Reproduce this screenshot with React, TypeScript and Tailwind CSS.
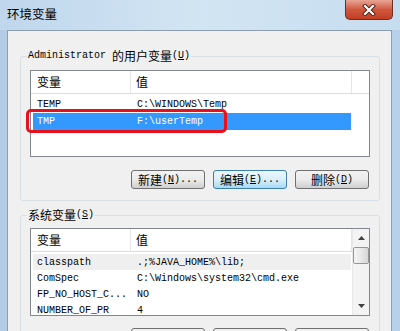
import React from 'react';

const mono = "font-['Liberation_Mono',monospace] text-[10px]";
const cjk = "font-['Noto_Sans_CJK_SC',sans-serif] text-[12px]";

type Row = { name: string; value: string };

function Hotkey({ k }: { k: string }) {
  return (
    <span className={mono}>
      (<span className="underline underline-offset-1">{k}</span>)
    </span>
  );
}

function Button({ label, hotkey, dots, active }: { label: string; hotkey: string; dots?: boolean; active?: boolean }) {
  return (
    <div
      className={
        'w-[74px] h-[19px] rounded-[3px] border flex items-center justify-center leading-none ' +
        (active
          ? 'border-[#3c7fb1] bg-gradient-to-b from-[#eaf6fd] via-[#d9f0fc] to-[#a7d9f5]'
          : 'border-[#707070] bg-gradient-to-b from-[#f2f2f2] via-[#ebebeb] to-[#cfcfcf]')
      }
    >
      <span className={cjk}>{label}</span>
      <Hotkey k={hotkey} />
      {dots && <span className={mono}>...</span>}
    </div>
  );
}

function Header({ extra }: { extra?: boolean }) {
  return (
    <div className="h-[23px] flex border-b border-[#dcdcdc] bg-white shrink-0">
      <div className={'w-[100px] pl-[6px] flex items-center border-r border-[#e5e5e5] ' + cjk}>变量</div>
      <div className={'w-[221px] pl-[5px] flex items-center border-r border-[#e5e5e5] ' + cjk}>值</div>
      {extra && <div className="flex-1" />}
    </div>
  );
}

function Rows({ rows, selected, gray, rowH }: { rows: Row[]; selected?: number; gray?: number; rowH: string }) {
  return (
    <div className="px-[2px] pt-[2px]">
      {rows.map((r, i) => (
        <div
          key={r.name}
          className={
            'w-[318px] flex items-center ' +
            rowH +
            ' ' +
            (i === selected ? 'bg-[#3399ff] text-white' : i === gray ? 'bg-[#efefef] text-black' : 'text-black')
          }
        >
          <div className={'w-[98px] pl-[4px] whitespace-nowrap overflow-hidden ' + mono}>{r.name}</div>
          <div className={'pl-[6px] whitespace-nowrap ' + mono}>{r.value}</div>
        </div>
      ))}
    </div>
  );
}

function Group({ children, legend }: { children: React.ReactNode; legend: React.ReactNode }) {
  return (
    <fieldset className="w-[360px] border border-[#d5dfe5] rounded-[3px] px-0">
      <legend className="ml-[6px] px-[1px] h-[16px] flex items-center leading-none">{legend}</legend>
      <div className="px-[9px]">{children}</div>
    </fieldset>
  );
}

export default function App() {
  const userRows: Row[] = [
    { name: 'TEMP', value: 'C:\\WINDOWS\\Temp' },
    { name: 'TMP', value: 'F:\\userTemp' },
  ];
  const sysRows: Row[] = [
    { name: 'classpath', value: '.;%JAVA_HOME%\\lib;' },
    { name: 'ComSpec', value: 'C:\\Windows\\system32\\cmd.exe' },
    { name: 'FP_NO_HOST_C...', value: 'NO' },
    { name: 'NUMBER_OF_PR', value: '4' },
  ];

  return (
    <div className="w-[400px] h-[331px] overflow-hidden flex flex-col bg-gradient-to-r from-[#b3cce4] via-[#cbe0f1] to-[#b6d1e9] text-black">
      {/* title bar */}
      <div className="h-[30px] shrink-0 flex justify-between bg-gradient-to-r from-[#bfd6ec] via-[#d2e5f3] to-[#c6ddef]">
        <div className="pl-[7px] pt-[6px] font-['Noto_Sans_CJK_SC',sans-serif] text-[12.5px] leading-[16px]">环境变量</div>
        <div className="mr-[7px] w-[48px] h-[20px] rounded-b-[5px] border border-t-0 border-[#6b2f24] bg-gradient-to-b from-[#e7a595] via-[#d0583f] to-[#c23e22] flex items-center justify-center">
          <svg width="14" height="12" viewBox="0 0 14 12">
            <path d="M3 2 L11 10 M11 2 L3 10" stroke="#4a1f18" strokeWidth="4" strokeLinecap="square" />
            <path d="M3 2 L11 10 M11 2 L3 10" stroke="#ffffff" strokeWidth="2.2" strokeLinecap="square" />
          </svg>
        </div>
      </div>

      {/* window body */}
      <div className="flex-1 flex pl-[7px] pr-[8px]">
        <div className="flex-1 bg-[#f0f0f0] border-l border-t border-r border-[#8d9db0] pl-[12px] pt-[17px]">
          <Group
            legend={
              <>
                <span className={mono + ' mr-[6px]'}>Administrator</span>
                <span className={cjk}>的用户变量</span>
                <Hotkey k="U" />
              </>
            }
          >
            <div className="relative pt-[6px]">
              <div className="w-[340px] h-[87px] border border-[#828790] bg-white overflow-hidden">
                <Header extra />
                <Rows rows={userRows} selected={1} rowH="h-[17px]" />
              </div>
              <div className="absolute left-[-4px] top-[45px] w-[201px] h-[24px] border-[3px] border-[#e8101a] rounded-[5px]" />
            </div>
            <div className="flex justify-end gap-[8px] pr-[1px] mt-[13px] pb-[11px]">
              <Button label="新建" hotkey="N" dots />
              <Button label="编辑" hotkey="E" dots active />
              <Button label="删除" hotkey="D" />
            </div>
          </Group>

          <div className="mt-[6px]">
            <Group
              legend={
                <>
                  <span className={cjk}>系统变量</span>
                  <Hotkey k="S" />
                </>
              }
            >
              <div className="pt-[5px]">
                <div className="w-[340px] h-[88px] border border-[#828790] bg-white overflow-hidden flex">
                  <div className="w-[321px]">
                    <Header />
                    <Rows rows={sysRows} gray={0} rowH="h-[16px]" />
                  </div>
                  <div className="flex-1 bg-[#f3f3f3] border-l border-[#e8e8e8] flex flex-col items-center">
                    <div className="h-[18px] flex items-center justify-center">
                      <svg width="7" height="4" viewBox="0 0 7 4"><path d="M0 4 L3.5 0 L7 4 Z" fill="#404040" /></svg>
                    </div>
                    <div className="w-[16px] h-[17px] rounded-[2px] border border-[#959595] bg-gradient-to-r from-[#f4f4f4] via-[#e8e8e8] to-[#d6d6d6]" />
                    <div className="flex-1" />
                    <div className="h-[18px] flex items-center justify-center">
                      <svg width="7" height="4" viewBox="0 0 7 4"><path d="M0 0 L7 0 L3.5 4 Z" fill="#404040" /></svg>
                    </div>
                  </div>
                </div>
              </div>
              <div className="flex justify-end gap-[8px] pr-[1px] mt-[12px] pb-[11px]">
                <Button label="新建" hotkey="W" dots />
                <Button label="编辑" hotkey="I" dots />
                <Button label="删除" hotkey="L" />
              </div>
            </Group>
          </div>
        </div>
      </div>
    </div>
  );
}
